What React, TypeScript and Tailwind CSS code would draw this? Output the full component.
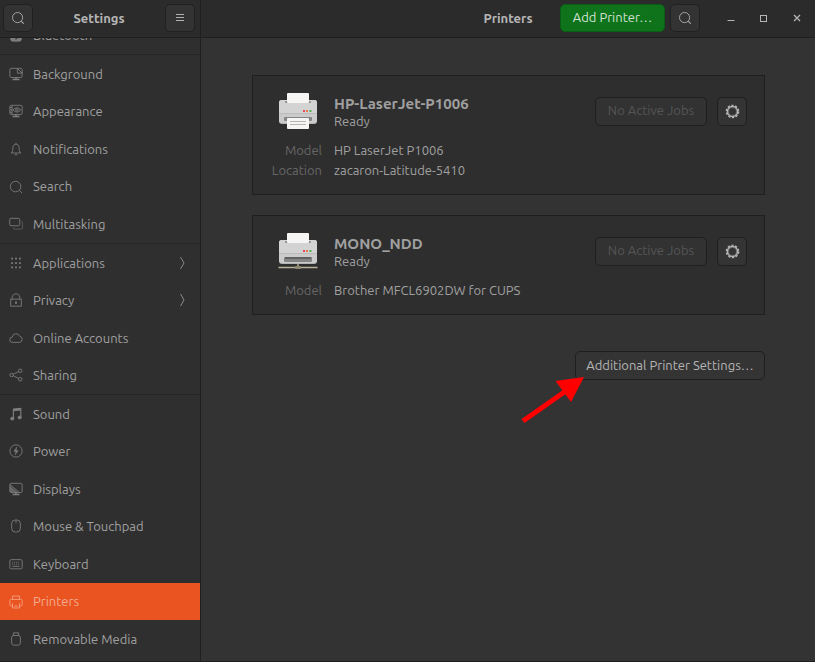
import { useState } from 'react';
import type { ReactNode } from 'react';

interface SettingsItem {
  id: string;
  label: string;
  icon: ReactNode;
  hasChildren?: boolean;
}

interface Printer {
  name: string;
  status: string;
  network: boolean;
  details: { label: string; value: string }[];
}

const GROUPS: SettingsItem[][] = [
  [
    {
      id: 'background',
      label: 'Background',
      icon: (
        <>
          <path d="M9 1.500H2.500A1.500 1.500 0 0 0 1 3v7.500A1.500 1.500 0 0 0 2.500 12h11a1.500 1.500 0 0 0 1.500-1.500V6" />
          <path d="M9.500 1.500h4A1.500 1.500 0 0 1 15 3v4H9.500zM9.500 1.500 15 7" />
          <path d="M8 12v2M4 14.300h8" strokeWidth="1.800" />
        </>
      ),
    },
    {
      id: 'appearance',
      label: 'Appearance',
      icon: (
        <>
          <rect x="1" y="1.500" width="14" height="10.500" rx="1.500" />
          <path d="M3.500 1.500V12M1 4h2.500M1 6.700h2.500M1 9.400h2.500" />
          <path d="M4.500 6.800q4.500-5 9 0q-4.500 5-9 0z" />
          <circle cx="9" cy="6.800" r="1.400" />
          <path d="M8 12v2M4 14.300h8" strokeWidth="1.800" />
        </>
      ),
    },
    {
      id: 'notifications',
      label: 'Notifications',
      icon: (
        <>
          <path d="M2.500 12.500h11c-1.700-1.500-2-3-2-6C11.500 4 10 2.500 8 2.500S4.500 4 4.500 6.500c0 3-.3 4.500-2 6z" />
          <path d="M8 1v1.500M6.500 14.500h3" />
        </>
      ),
    },
    {
      id: 'search',
      label: 'Search',
      icon: (
        <>
          <circle cx="7.500" cy="7.500" r="6" />
          <path d="m12 12 3 3" />
        </>
      ),
    },
    {
      id: 'multitasking',
      label: 'Multitasking',
      icon: (
        <>
          <rect x="0.800" y="1.500" width="11.500" height="8.500" rx="1.500" />
          <path
            d="M14 5h.2a1.300 1.300 0 0 1 1.300 1.300v6.200a1.300 1.300 0 0 1-1.300 1.300H6.300A1.300 1.300 0 0 1 5 12.500V12"
            opacity=".6"
          />
        </>
      ),
    },
  ],
  [
    {
      id: 'applications',
      label: 'Applications',
      hasChildren: true,
      icon: (
        <path
          d="M2.500 3h2M7 3h2M11.500 3h2M2.500 8h2M7 8h2M11.500 8h2M2.500 13h2M7 13h2M11.500 13h2"
          strokeWidth="2"
        />
      ),
    },
    {
      id: 'privacy',
      label: 'Privacy',
      hasChildren: true,
      icon: (
        <>
          <rect x="2" y="7" width="12" height="8" />
          <path d="M3.700 7V4.800C3.700 2.500 5.600 1 8 1s4.300 1.500 4.300 3.800V7" />
          <path d="M8 9.500v3" strokeWidth="1.800" />
        </>
      ),
    },
    {
      id: 'online-accounts',
      label: 'Online Accounts',
      icon: <path d="M4 13a3 3 0 0 1-.3-6 4.400 4.400 0 0 1 8.500-1A3.600 3.600 0 0 1 12.300 13z" />,
    },
    {
      id: 'sharing',
      label: 'Sharing',
      icon: (
        <>
          <circle cx="3" cy="8" r="2" />
          <circle cx="12.800" cy="3.200" r="2" />
          <circle cx="12.800" cy="12.800" r="2" />
          <path d="m5 7 5.800-2.800M5 9l5.800 2.800" />
        </>
      ),
    },
  ],
  [
    {
      id: 'sound',
      label: 'Sound',
      icon: (
        <>
          <path d="M5 13V2.500l8.500-1V11.500" strokeWidth="1.300" />
          <path d="m5 3.500 8.500-1" strokeWidth="2.800" />
          <ellipse cx="3.700" cy="13.300" rx="1.900" ry="1.600" fill="currentColor" />
          <ellipse cx="12.200" cy="12" rx="1.900" ry="1.600" fill="currentColor" />
        </>
      ),
    },
    {
      id: 'power',
      label: 'Power',
      icon: (
        <>
          <circle cx="8" cy="8" r="7" />
          <path d="M9 3.500 5.500 8.500H8L7 12.500l3.500-5H8z" fill="currentColor" strokeWidth="0.500" />
        </>
      ),
    },
    {
      id: 'displays',
      label: 'Displays',
      icon: (
        <>
          <rect x="1" y="1.500" width="14" height="10.500" rx="1.500" />
          <path d="m1 3 11 9M1 6l7 6M1 9l4 3" />
          <path d="M1 4v8h10z" fill="currentColor" opacity=".5" stroke="none" />
          <path d="M8 12v2M4 14.300h8" strokeWidth="1.800" />
        </>
      ),
    },
    {
      id: 'mouse',
      label: 'Mouse & Touchpad',
      icon: (
        <>
          <rect x="3" y="1" width="10" height="14" rx="4.500" />
          <path d="M8 1v3.500" />
        </>
      ),
    },
    {
      id: 'keyboard',
      label: 'Keyboard',
      icon: (
        <>
          <rect x="1" y="3" width="14" height="10.500" rx="1.500" />
          <path d="M3.500 6h9M3.500 8.200h9" strokeDasharray="1.200 1" />
          <path d="M4 10.700h8" />
        </>
      ),
    },
    {
      id: 'printers',
      label: 'Printers',
      icon: (
        <>
          <path d="M4 5V1.200h8V5" />
          <path d="M3.500 12.500h-1A1.500 1.500 0 0 1 1 11V6.500A1.500 1.500 0 0 1 2.500 5h11A1.500 1.500 0 0 1 15 6.500V11a1.500 1.500 0 0 1-1.500 1.500h-1" />
          <path d="M4 9.500v5.300h8V9.500M6 12.500h4" />
        </>
      ),
    },
    {
      id: 'removable-media',
      label: 'Removable Media',
      icon: (
        <>
          <path d="M5 4V1h6v3" />
          <rect x="3" y="4" width="10" height="11" rx="2.500" />
        </>
      ),
    },
  ],
];

const PRINTERS: Printer[] = [
  {
    name: 'HP-LaserJet-P1006',
    status: 'Ready',
    network: false,
    details: [
      { label: 'Model', value: 'HP LaserJet P1006' },
      { label: 'Location', value: 'zacaron-Latitude-5410' },
    ],
  },
  {
    name: 'MONO_NDD',
    status: 'Ready',
    network: true,
    details: [{ label: 'Model', value: 'Brother MFCL6902DW for CUPS' }],
  },
];

const HEADER_BUTTON =
  'flex h-7 w-[30px] items-center justify-center rounded-[5px] border border-[#202020] bg-[#333333] text-[#b0b0b0]';

function LineIcon({ children, className }: { children: ReactNode; className: string }) {
  return (
    <svg viewBox="0 0 16 16" className={className} fill="none" stroke="currentColor" aria-hidden="true">
      {children}
    </svg>
  );
}

function SearchIcon() {
  return (
    <LineIcon className="size-[14px]">
      <circle cx="7.500" cy="7.500" r="5.800" />
      <path d="m11.800 11.800 2.700 2.700" strokeWidth="1.200" />
    </LineIcon>
  );
}

function GearIcon() {
  return (
    <svg viewBox="0 0 16 16" className="size-[15px]" fill="none" stroke="currentColor" aria-hidden="true">
      <circle cx="8" cy="8" r="6.500" strokeWidth="1.600" strokeDasharray="2.400 1.684" />
      <circle cx="8" cy="8" r="5.500" strokeWidth="1.300" />
      <circle cx="8" cy="8" r="4.300" strokeWidth="0.800" opacity=".7" />
    </svg>
  );
}

function PrinterArt({ network }: { network: boolean }) {
  return (
    <svg viewBox="0 0 40 40" className="size-10 justify-self-center" aria-hidden="true">
      <rect x="1" y="8" width="38" height="24" rx="3" fill="#b4b4b4" />
      <rect x="1" y="8" width="38" height="23" rx="3" fill="#cbcbcb" />
      <path d="M1 11a3 3 0 0 1 3-3h32a3 3 0 0 1 3 3v10H1z" fill="#d3d3d3" />
      <path d="M1 21.500h38" stroke="#bcbcbc" />
      <rect x="7" y="9" width="26" height="2" rx="1" fill="#8c8c8c" />
      <rect x="9" y="1" width="22" height="10" rx="1" fill="#f7f5f3" />
      <rect x="25" y="18" width="2" height="2" fill="#e5495b" />
      <rect x="28" y="18" width="2" height="2" fill="#e8744a" />
      <rect x="31.500" y="18" width="2" height="2" fill="#4caf50" />
      {network ? (
        <>
          <rect x="6" y="25" width="28" height="5" rx="1" fill="#858585" />
          <rect x="7" y="25" width="26" height="2" fill="#626262" />
          <path d="M0.500 35.500h39" stroke="#b9b39b" strokeWidth="1.500" />
          <path d="M20 32v3" stroke="#8f8a74" strokeWidth="2" />
          <rect x="17" y="34" width="6" height="3" rx="1" fill="#8f8a74" />
        </>
      ) : (
        <>
          <rect x="6" y="25" width="28" height="4" rx="1" fill="#858585" />
          <rect x="9" y="26" width="22" height="11" rx="1" fill="#f7f5f3" />
          <path d="M12 29.500h16M12 32.500h16" stroke="#b5b5b5" />
        </>
      )}
    </svg>
  );
}

function SidebarRow({ item, active, onSelect }: { item: SettingsItem; active: boolean; onSelect: () => void }) {
  return (
    <li className="grid">
      <button
        type="button"
        onClick={onSelect}
        aria-current={active ? 'page' : undefined}
        className={`flex items-center gap-[10px] pr-3 pl-[9px] text-left ${
          active ? 'bg-[#e95420] text-[#f3aa8f]' : 'text-[#a0a0a0]'
        }`}
      >
        <LineIcon className={`size-[14px] shrink-0 ${active ? 'text-[#f3a184]' : 'text-[#7e7e7e]'}`}>
          {item.icon}
        </LineIcon>
        <span className="flex-1 pt-px">{item.label}</span>
        {item.hasChildren && (
          <svg
            viewBox="0 0 12 14"
            className="h-[14px] w-3 text-[#8a8a8a]"
            fill="none"
            stroke="currentColor"
            aria-hidden="true"
          >
            <path d="M4.500 1 8 7l-3.500 6" />
          </svg>
        )}
      </button>
    </li>
  );
}

function Sidebar({ selected, onSelect }: { selected: string; onSelect: (id: string) => void }) {
  return (
    <nav className="overflow-hidden border-r border-[#1f1f1f] bg-[#2f2f2f]">
      {/* list is scrolled so that the first row is mostly under the header */}
      <div className="-mt-[22px]">
        <ul className="grid h-[38px] auto-rows-fr">
          <SidebarRow
            item={{
              id: 'bluetooth',
              label: 'Bluetooth',
              icon: (
                <>
                  <rect x="2" y="1" width="12" height="14" rx="2" fill="currentColor" />
                  <path d="m5 5 6 5-3 3V3l3 3-6 5" className="stroke-[#2f2f2f]" />
                </>
              ),
            }}
            active={selected === 'bluetooth'}
            onSelect={() => onSelect('bluetooth')}
          />
        </ul>
        {GROUPS.map((group, i) => (
          <ul
            key={group[0].id}
            className={`grid auto-rows-fr border-t border-[#272727] ${
              ['h-[189px]', 'h-[151px]', 'h-[264px]'][i]
            }`}
          >
            {group.map((item) => (
              <SidebarRow
                key={item.id}
                item={item}
                active={selected === item.id}
                onSelect={() => onSelect(item.id)}
              />
            ))}
          </ul>
        ))}
      </div>
    </nav>
  );
}

function PrinterCard({ printer }: { printer: Printer }) {
  return (
    <article className="border border-[#1f1f1f] bg-[#2e2e2e] pt-4 pr-[17px] pb-[14px] pl-5 text-[#a0a0a0]">
      <div className="grid grid-cols-[49px_1fr_auto] items-center gap-x-3">
        <PrinterArt network={printer.network} />
        <div>
          <h2 className="text-[15px] leading-[18px] font-bold">{printer.name}</h2>
          <p className="leading-4">{printer.status}</p>
        </div>
        <div className="flex gap-[10px] pb-[2px]">
          <button
            type="button"
            disabled
            className="h-[29px] w-28 rounded-[5px] border border-[#1f1f1f] bg-[#323232] text-[#555555]"
          >
            No Active Jobs
          </button>
          <button
            type="button"
            aria-label={`Options for ${printer.name}`}
            className="flex h-[29px] w-[30px] items-center justify-center rounded-[5px] border border-[#1f1f1f] bg-[#343434] text-[#b5b5b5]"
          >
            <GearIcon />
          </button>
        </div>
      </div>
      <dl className="mt-2">
        {printer.details.map((d) => (
          <div key={d.label} className="grid grid-cols-[49px_1fr] gap-x-3 leading-5">
            <dt className="flex justify-end text-[#666666]">{d.label}</dt>
            <dd>{d.value}</dd>
          </div>
        ))}
      </dl>
    </article>
  );
}

export default function App() {
  const [selected, setSelected] = useState('printers');

  return (
    <div className="grid h-screen grid-cols-[201px_1fr] grid-rows-[38px_1fr] border-b border-[#1f1f1f] bg-[#333333] font-['Ubuntu','Noto_Sans',sans-serif] text-[13px] text-[#b5b5b5]">
      <header className="flex items-center justify-between border-r border-b border-[#1f1f1f] bg-[#2b2b2b] pr-[5px] pb-px pl-[3px]">
        <button type="button" aria-label="Search settings" className={HEADER_BUTTON}>
          <SearchIcon />
        </button>
        <h1 className="pt-px font-bold">Settings</h1>
        <button type="button" aria-label="Menu" className={HEADER_BUTTON}>
          <LineIcon className="size-4">
            <path d="M4 4.500h8M4 7.500h8M4 10.500h8" />
          </LineIcon>
        </button>
      </header>

      <header className="grid grid-cols-[1fr_auto_1fr] items-center border-b border-[#1f1f1f] bg-[#2b2b2b] pb-px">
        <h1 className="col-start-2 pt-px font-bold">Printers</h1>
        <div className="flex items-center justify-end pr-[10px]">
          <button
            type="button"
            className="h-7 w-[105px] rounded-[5px] border border-[#0b5c14] bg-[#0e731a] text-[#cfe0d0]"
          >
            Add Printer…
          </button>
          <button type="button" aria-label="Search printers" className={`ml-[5px] ${HEADER_BUTTON}`}>
            <SearchIcon />
          </button>
          <div className="ml-[23px] flex gap-[17px]">
            <button type="button" aria-label="Minimize">
              <LineIcon className="size-4">
                <path d="M4.500 10.500h7" />
              </LineIcon>
            </button>
            <button type="button" aria-label="Maximize">
              <LineIcon className="size-4">
                <rect x="4.500" y="5.500" width="6" height="6" />
              </LineIcon>
            </button>
            <button type="button" aria-label="Close">
              <LineIcon className="size-4">
                <path d="m5 5 6 6M11 5l-6 6" strokeWidth="1.300" />
              </LineIcon>
            </button>
          </div>
        </div>
      </header>

      <Sidebar selected={selected} onSelect={setSelected} />

      <main className="flex flex-col gap-5 overflow-hidden pt-[37px] pr-[50px] pl-[51px]">
        {PRINTERS.map((printer) => (
          <PrinterCard key={printer.name} printer={printer} />
        ))}
        <div className="relative mt-4 self-end">
          <button
            type="button"
            className="h-[29px] w-[190px] rounded-[5px] border border-[#1f1f1f] bg-[#343434] text-[#b5b5b5]"
          >
            Additional Printer Settings…
          </button>
          <svg
            viewBox="0 0 66 50"
            className="pointer-events-none absolute top-6 -left-14 h-[50px] w-[66px]"
            aria-hidden="true"
          >
            <path d="M4 46 46 16.500" stroke="#ff0000" strokeWidth="5" />
            <path d="M65 2 36.500 6 52 27z" fill="#ff0000" />
          </svg>
        </div>
      </main>
    </div>
  );
}
